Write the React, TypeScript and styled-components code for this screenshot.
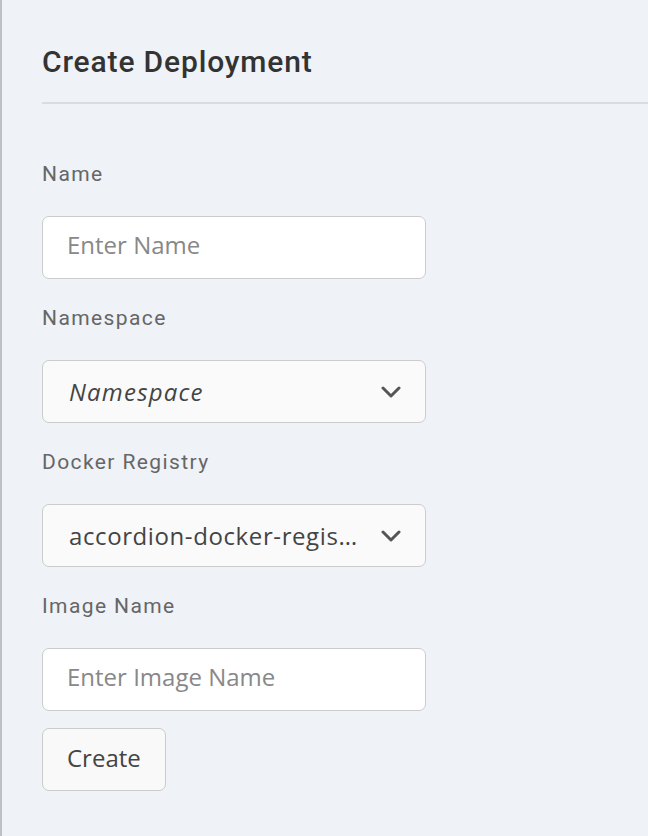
import styled, { createGlobalStyle } from "styled-components";

const GlobalStyle = createGlobalStyle`
  html, body {
    margin: 0;
    padding: 0;
    background: #eff2f7;
  }
  * {
    box-sizing: border-box;
  }
`;

const Page = styled.div`
  min-height: 836px;
  background: #eff2f7;
  border-left: 2px solid #bfbfc7;
  padding-left: 40px;
  font-family: Roboto, "Liberation Sans", sans-serif;
`;

const Header = styled.div`
  padding-top: 44px;
  padding-bottom: 22px;
  border-bottom: 2px solid #dadce0;
`;

const Title = styled.h1`
  margin: 0;
  font-size: 30px;
  line-height: 36px;
  font-weight: 500;
  letter-spacing: 0.85px;
  color: #333333;
`;

const Form = styled.form`
  display: flex;
  flex-direction: column;
  align-items: flex-start;
  padding-top: 48px;
`;

const Field = styled.div`
  display: flex;
  flex-direction: column;
  margin-bottom: 17px;
`;

const Label = styled.label`
  margin-top: 8px;
  margin-bottom: 28px;
  font-size: 21px;
  line-height: 28px;
  letter-spacing: 1.4px;
  color: #666666;
`;

const control = `
  width: 384px;
  height: 63px;
  border: 1px solid #cccccc;
  border-radius: 7px;
  font-family: "Open Sans", "Noto Sans", sans-serif;
  font-size: 24px;
`;

const TextInput = styled.input`
  ${control}
  padding: 0 24px 6px;
  background: #ffffff;
  color: #333333;
  outline: none;

  &::placeholder {
    color: #888888;
  }
`;

const Select = styled.div`
  ${control}
  display: flex;
  align-items: center;
  gap: 15px;
  padding: 0 24px 0 26px;
  background: #fafafa;
  color: #444444;
  cursor: pointer;
`;

const SelectValue = styled.span<{ $placeholder?: boolean }>`
  flex: 1;
  min-width: 0;
  overflow: hidden;
  white-space: nowrap;
  text-overflow: ellipsis;
  font-style: ${(props) => (props.$placeholder ? "italic" : "normal")};
  letter-spacing: ${(props) => (props.$placeholder ? "1.2px" : "0.6px")};
`;

const Chevron = () => (
  <svg width="20" height="12" viewBox="0 0 20 12" fill="none">
    <path
      d="M2 2l8 8 8-8"
      stroke="#555555"
      strokeWidth="3"
      strokeLinecap="round"
      strokeLinejoin="round"
    />
  </svg>
);

const Button = styled.button`
  height: 63px;
  padding: 0 24px 4px;
  border: 1px solid #cccccc;
  border-radius: 7px;
  background: #f9f9f9;
  color: #444444;
  font-family: "Open Sans", "Noto Sans", sans-serif;
  font-size: 24px;
  cursor: pointer;
`;

export default function App() {
  return (
    <>
      <GlobalStyle />
      <Page>
        <Header>
          <Title>Create Deployment</Title>
        </Header>
        <Form onSubmit={(e) => e.preventDefault()}>
          <Field>
            <Label>Name</Label>
            <TextInput placeholder="Enter Name" />
          </Field>
          <Field>
            <Label>Namespace</Label>
            <Select>
              <SelectValue $placeholder>Namespace</SelectValue>
              <Chevron />
            </Select>
          </Field>
          <Field>
            <Label>Docker Registry</Label>
            <Select>
              <SelectValue>accordion-docker-registry-secret</SelectValue>
              <Chevron />
            </Select>
          </Field>
          <Field>
            <Label>Image Name</Label>
            <TextInput placeholder="Enter Image Name" />
          </Field>
          <Button type="submit">Create</Button>
        </Form>
      </Page>
    </>
  );
}
